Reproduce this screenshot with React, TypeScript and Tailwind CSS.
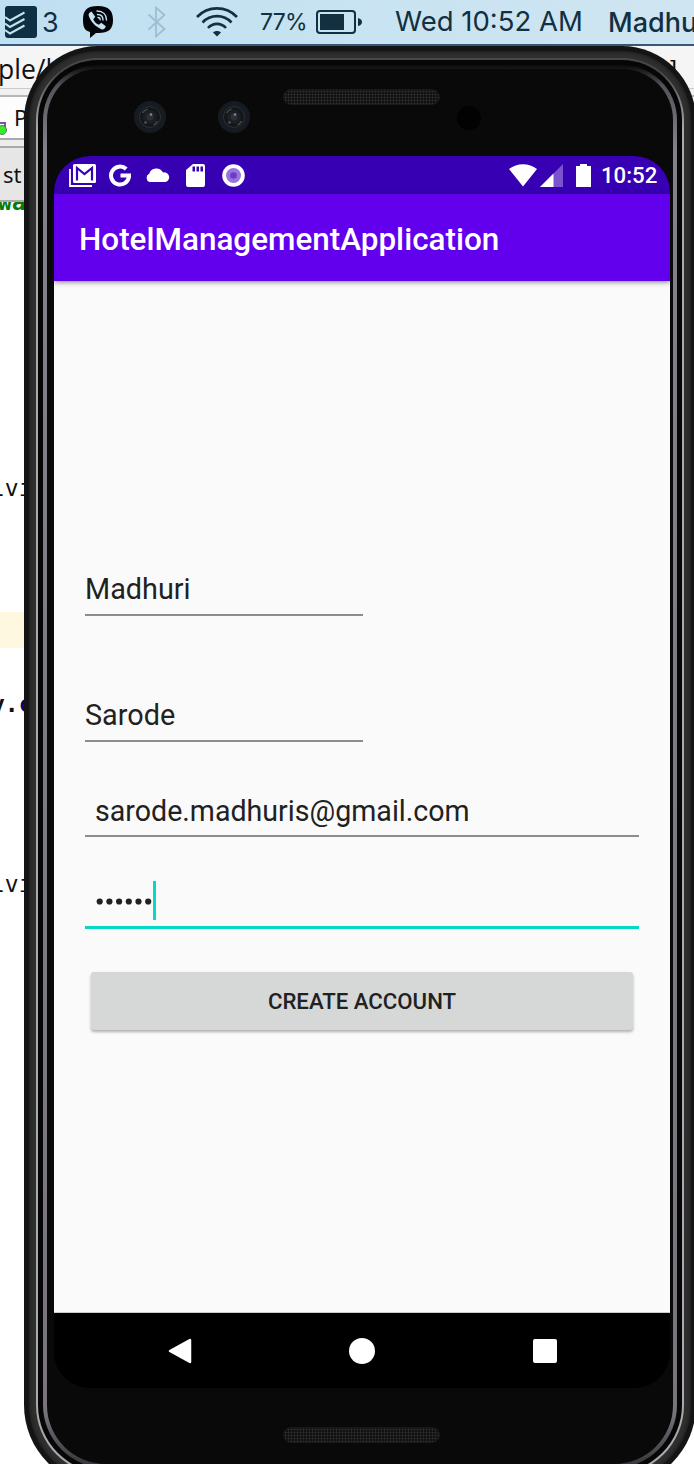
import React from "react";

function Lens() {
  return (
    <svg className="h-8 w-8" viewBox="0 0 32 32">
      <circle cx="16" cy="16" r="16" fill="#151b20" />
      <circle cx="16" cy="16" r="10.500" fill="#14171a" stroke="#2c3033" strokeWidth="1" />
      <circle cx="16" cy="16" r="7" fill="#1d1f23" />
      <path d="M8.500 12a9 9 0 0 1 5-4M23.500 20a9 9 0 0 1-4 4" stroke="#55534f" strokeWidth="1.200" fill="none" />
      <circle cx="16" cy="16" r="3.500" fill="#2b2f39" />
      <circle cx="17" cy="13.500" r="1.300" fill="#83869a" />
      <circle cx="11.500" cy="21.500" r="1.200" fill="#57565c" />
    </svg>
  );
}

function Grille() {
  return (
    <div className="h-[16px] w-[157px] rounded-full border border-[#191919] bg-[#111] bg-[radial-gradient(circle,#303030_0.8px,transparent_1.2px)] bg-[size:3px_3px]" />
  );
}

function MenuBar() {
  return (
    <header className="flex h-[46px] w-[780px] items-center border-b-2 border-[#35577a] bg-gradient-to-r from-[#bfe0f2] to-[#d2e6f1] font-['Inter'] text-[#123040]">
      <svg className="ml-[5px] h-8 w-8 shrink-0" viewBox="0 0 32 32">
        <rect width="32" height="32" rx="3" fill="#0e3042" />
        <path d="M0 11l5 3.500L19.500 6.500M0 17.500l5 3.500L19.500 13M0 24l5 3.500L19.500 19.500" stroke="#c5e2f0" strokeWidth="2" fill="none" />
      </svg>
      <span className="ml-[5px] w-[18px] text-[27px] leading-none">3</span>
      <svg className="ml-[22px] h-8 w-8 shrink-0" viewBox="0 0 32 32">
        <path d="M16 0C5 0 1 4 1 14c0 7 1.500 10.500 7 12v6l6-5h2c11 0 15-4 15-13S27 0 16 0z" fill="#02040a" />
        <path d="M9.500 5.500c-2 .7-3.500 2.500-2.700 4.500 2.200 6 6.500 10.500 12.500 13.200 2.200.8 4-1 4.500-3l-4.500-3.500-2.500 2c-3-1-4.500-3-5.500-5.500l2-2.500z" fill="#c5e2f0" />
        <path d="M15 5c6 0 9.500 3.500 9.500 9M15.500 8.500c3.500 0 5.500 2 5.500 5.500M16 11.500c1.500 0 2.200.8 2.200 2.200" stroke="#c5e2f0" strokeWidth="1.400" strokeLinecap="round" fill="none" />
      </svg>
      <svg className="ml-[33px] h-[32px] w-5 shrink-0" viewBox="0 0 20 32">
        <path d="M1.500 8.500l16 14.500-8.500 7.500V1.500L17.500 9 1.500 23.500" stroke="#9cbfd2" strokeWidth="1.800" fill="none" />
      </svg>
      <svg className="ml-[29px] h-[30px] w-[42px] shrink-0" viewBox="0 0 42 30">
        <g stroke="#123040" strokeWidth="2.600" fill="none">
          <path d="M1 10C12-1.500 30-1.500 41 10" />
          <path d="M6.500 15.500c8-8.500 21-8.500 29 0" />
          <path d="M12 21c5-5.500 13-5.500 18 0" />
        </g>
        <path d="M17 25.500c2-2 6-2 8 0l-4 4z" fill="#123040" />
      </svg>
      <span className="ml-[22px] w-[51px] whitespace-nowrap text-[23px] leading-none tracking-[-0.7px]">77%</span>
      <svg className="ml-[5px] h-6 w-[46px] shrink-0" viewBox="0 0 46 24">
        <rect x="1" y="1" width="38" height="22" rx="3" fill="none" stroke="#123040" strokeWidth="2" />
        <rect x="4" y="4" width="24" height="16" fill="#123040" />
        <path d="M42 8q4 1 4 4t-4 4z" fill="#123040" />
      </svg>
      <span className="ml-[33px] w-[188px] whitespace-nowrap text-[27.500px] leading-none">Wed 10:52 AM</span>
      <span className="ml-[25px] whitespace-nowrap text-[27px] font-medium leading-none">Madhuri</span>
    </header>
  );
}

function Editor() {
  return (
    <div className="h-[1418px] w-full overflow-hidden bg-white font-['Noto_Sans'] text-[#111]">
      <div className="flex h-[43px] items-center justify-between border-b border-[#ccc] bg-[#f5f5f5] pt-1 text-[26.500px] leading-none">
        <span className="-ml-0.5 font-['Open_Sans']">ple/h</span>
        <span className="mr-[17px] font-['Liberation_Sans'] text-[24px]">]</span>
      </div>
      <div className="h-[8px] border-b-2 border-[#b8b8b8] bg-[#f1f1f1]" />
      <div className="flex h-[43px] items-center border-b-2 border-[#aaa] bg-[#fdfdfd]">
        <svg className="mt-5 h-5 w-[14px]" viewBox="0 0 14 20">
          <path d="M0 5h5v5" stroke="#7657a6" strokeWidth="2" fill="none" />
          <circle cx="2" cy="12" r="4.500" fill="#35ef2c" stroke="#667064" />
        </svg>
        <span className="text-[22px]">P</span>
      </div>
      <div className="h-1.5 bg-[#ededed]" />
      <div className="flex h-[56px] items-center border-y-2 border-[#aaa] bg-[#e6e6e6] pl-[3px] text-[22px]">st</div>
      <div className="flex h-[16px] items-center overflow-hidden bg-white font-['DejaVu_Sans_Mono'] text-[23px] font-bold text-[#087b0c]">
        <span className="-ml-0.5 -mt-4 leading-none">wa</span>
      </div>
      <div className="flex h-[354px] items-end pb-[60px] font-['DejaVu_Sans_Mono'] text-[23px] leading-[48px]">
        <span className="-ml-[9px]">lvi</span>
      </div>
      <div className="-mt-[2px] flex h-[78px] items-end">
        <div className="h-[36px] w-full bg-[#fff8e1]" />
      </div>
      <div className="mt-[32px] h-12 font-['DejaVu_Sans_Mono'] text-[23px] leading-[48px]">
        <span className="-ml-[9px] font-bold">y.</span><span className="font-bold text-[#000080]">c</span>
      </div>
      <div className="mt-[132px] h-12 font-['DejaVu_Sans_Mono'] text-[23px] leading-[48px]">
        <span className="-ml-[9px]">lvi</span>
      </div>
    </div>
  );
}

function StatusBar() {
  return (
    <div className="flex h-[38px] shrink-0 items-center bg-[#3700b3] pl-[15px] pr-[12px] text-white">
      <svg className="h-[23px] w-[27px]" viewBox="0 0 27 23">
        <path d="M1 5v17h22" stroke="white" strokeWidth="1.800" fill="none" />
        <rect x="4" y="0" width="23" height="19" rx="1.500" fill="white" />
        <path d="M8 16.500V4l7.500 6L23 4v12.500" stroke="#3700b3" strokeWidth="2.200" fill="none" />
      </svg>
      <svg className="ml-[13px] h-[23px] w-[22px]" viewBox="0 0 22 23">
        <path d="M17.200 5A9 9 0 1 0 20 12.500V11.500H11.500" stroke="white" strokeWidth="4" fill="none" />
      </svg>
      <svg className="ml-[14px] h-[14px] w-[25px]" viewBox="0 0 25 14">
        <path d="M4.500 14a4.500 4.500 0 0 1-.3-8.300A7.500 7.500 0 0 1 18 4.500 4.800 4.800 0 0 1 20.500 14z" fill="white" />
      </svg>
      <svg className="ml-[16px] h-[23px] w-[19px]" viewBox="0 0 19 23">
        <path fillRule="evenodd" d="M7 0h10q2 0 2 2v19q0 2-2 2H2q-2 0-2-2V6zM6.500 2.500v5h2.500v-5zm4 0v5H13v-5zm4 0v5H17v-5z" fill="white" />
      </svg>
      <svg className="ml-[17px] h-[23px] w-[23px]" viewBox="0 0 23 23">
        <circle cx="11.500" cy="11.500" r="11.300" fill="white" />
        <circle cx="11.500" cy="11.500" r="7.500" fill="#9875db" />
        <circle cx="11.500" cy="11.500" r="3.300" fill="#6c3bc8" />
      </svg>
      <span className="grow" />
      <svg className="h-[23px] w-[28px]" viewBox="0 0 28 23">
        <path d="M0 5C8-1.500 20-1.500 28 5L14 22.500z" fill="white" />
      </svg>
      <svg className="ml-[3px] h-[23px] w-[23px]" viewBox="0 0 23 23">
        <path d="M23 0v23H0z" fill="#7a52cd" />
        <path d="M13.500 9.500V23H0z" fill="white" />
      </svg>
      <svg className="ml-[13px] h-[23px] w-[15px]" viewBox="0 0 15 23">
        <path d="M4 0h7v2h4v21H0V2h4z" fill="white" />
      </svg>
      <span className="ml-[10px] w-[57px] whitespace-nowrap text-[22.200px] font-medium leading-none">10:52</span>
    </div>
  );
}

function Field({ value, short }: { value: string; short?: boolean }) {
  return (
    <div className={short ? "h-[42px] w-[278px] border-b-2 border-[#8c8c8c] text-[28.800px] leading-[30px]" : "h-[43px] w-[554px] border-b-2 border-[#8c8c8c] pl-[10px] text-[28.600px] leading-[35px]"}>
      {value}
    </div>
  );
}

function Screen() {
  return (
    <div className="flex h-[1232px] w-[616px] flex-col overflow-hidden rounded-[36px] bg-black font-['Roboto'] text-[#212121]">
      <StatusBar />
      <div className="relative h-[87px] shrink-0 bg-[#6200ee] pl-[25px] text-[31.450px] font-medium leading-[92px] text-white shadow-[0_1px_5px_rgba(0,0,0,0.5)]">
        HotelManagementApplication
      </div>
      <main className="flex h-[1032px] shrink-0 flex-col items-start border-b border-[#ccc] bg-[#fafafa] pl-[31px] pt-[293px]">
        <Field value="Madhuri" short />
        <div className="h-[84px]" />
        <Field value="Sarode" short />
        <div className="h-[52px]" />
        <Field value="sarode.madhuris@gmail.com" />
        <div className="mt-[44px] flex h-[48px] w-[554px] items-start border-b-[3px] border-[#03dac5] pl-[11px]">
          <svg className="mt-[17px] h-[7px] w-[57px]" viewBox="0 0 57 7">
            <g fill="#212121">
              <circle cx="3.700" cy="3.500" r="3.100" />
              <circle cx="13.400" cy="3.500" r="3.100" />
              <circle cx="23.100" cy="3.500" r="3.100" />
              <circle cx="32.800" cy="3.500" r="3.100" />
              <circle cx="42.500" cy="3.500" r="3.100" />
              <circle cx="52.200" cy="3.500" r="3.100" />
            </g>
          </svg>
          <span className="h-[39px] w-[3px] bg-[#03dac5]" />
        </div>
        <button className="ml-[6px] mt-[43px] h-[58px] w-[542px] rounded-[3px] bg-[#d6d7d7] pt-0.5 text-[22.200px] font-medium text-[#212121] shadow-[0_2px_3px_rgba(0,0,0,0.3)]">
          CREATE ACCOUNT
        </button>
      </main>
      <nav className="flex h-[75px] items-center bg-black pl-[114px] text-white">
        <svg className="h-[26px] w-[24px]" viewBox="0 0 24 26">
          <path d="M2 13L22 2v22z" fill="white" stroke="white" strokeWidth="2.500" strokeLinejoin="round" />
        </svg>
        <span className="ml-[157px] h-[26px] w-[26px] rounded-full bg-white" />
        <span className="ml-[158px] h-6 w-6 rounded-[2px] bg-white" />
      </nav>
    </div>
  );
}

function Phone() {
  return (
    <div className="absolute left-6 top-[46px] h-[1441px] w-[672px] rounded-b-[82px] rounded-t-[74px] bg-[#141414] p-[5px]">
      <div className="h-full w-full rounded-b-[77px] rounded-t-[69px] bg-[#303030] p-[7px] shadow-[inset_0_0_5px_#111]">
        <div className="h-full w-full rounded-b-[70px] rounded-t-[62px] bg-[linear-gradient(to_bottom,#484848_0,#484848_1%,#aaa_5%,#aaa_100%)] p-[2px]">
          <div className="h-full w-full rounded-b-[68px] rounded-t-[60px] bg-[#060606] p-[5px]">
            <div className="h-full w-full rounded-b-[63px] rounded-t-[55px] bg-[linear-gradient(to_bottom,#0a0a0a_0,#55535a_1.5%,#85818a_6%,#78747a_96%,#33333a_100%)] p-[4px]">
              <div className="flex h-full w-full flex-col rounded-b-[59px] rounded-t-[51px] bg-[#090909] pl-[7px]">
                <div className="flex h-[87px] w-full pl-[80px]">
                  <div className="mt-[32px]"><Lens /></div>
                  <div className="ml-[52px] mt-[32px]"><Lens /></div>
                  <div className="ml-[33px] mt-[20px]"><Grille /></div>
                  <div className="ml-[17px] mt-[37px] h-6 w-6 rounded-full bg-[#020202]" />
                </div>
                <Screen />
                <div className="pl-[229px] pt-[39px]"><Grille /></div>
              </div>
            </div>
          </div>
        </div>
      </div>
    </div>
  );
}

export default function App() {
  return (
    <div className="relative h-[1464px] w-[694px] overflow-hidden bg-white">
      <MenuBar />
      <Editor />
      <Phone />
    </div>
  );
}
